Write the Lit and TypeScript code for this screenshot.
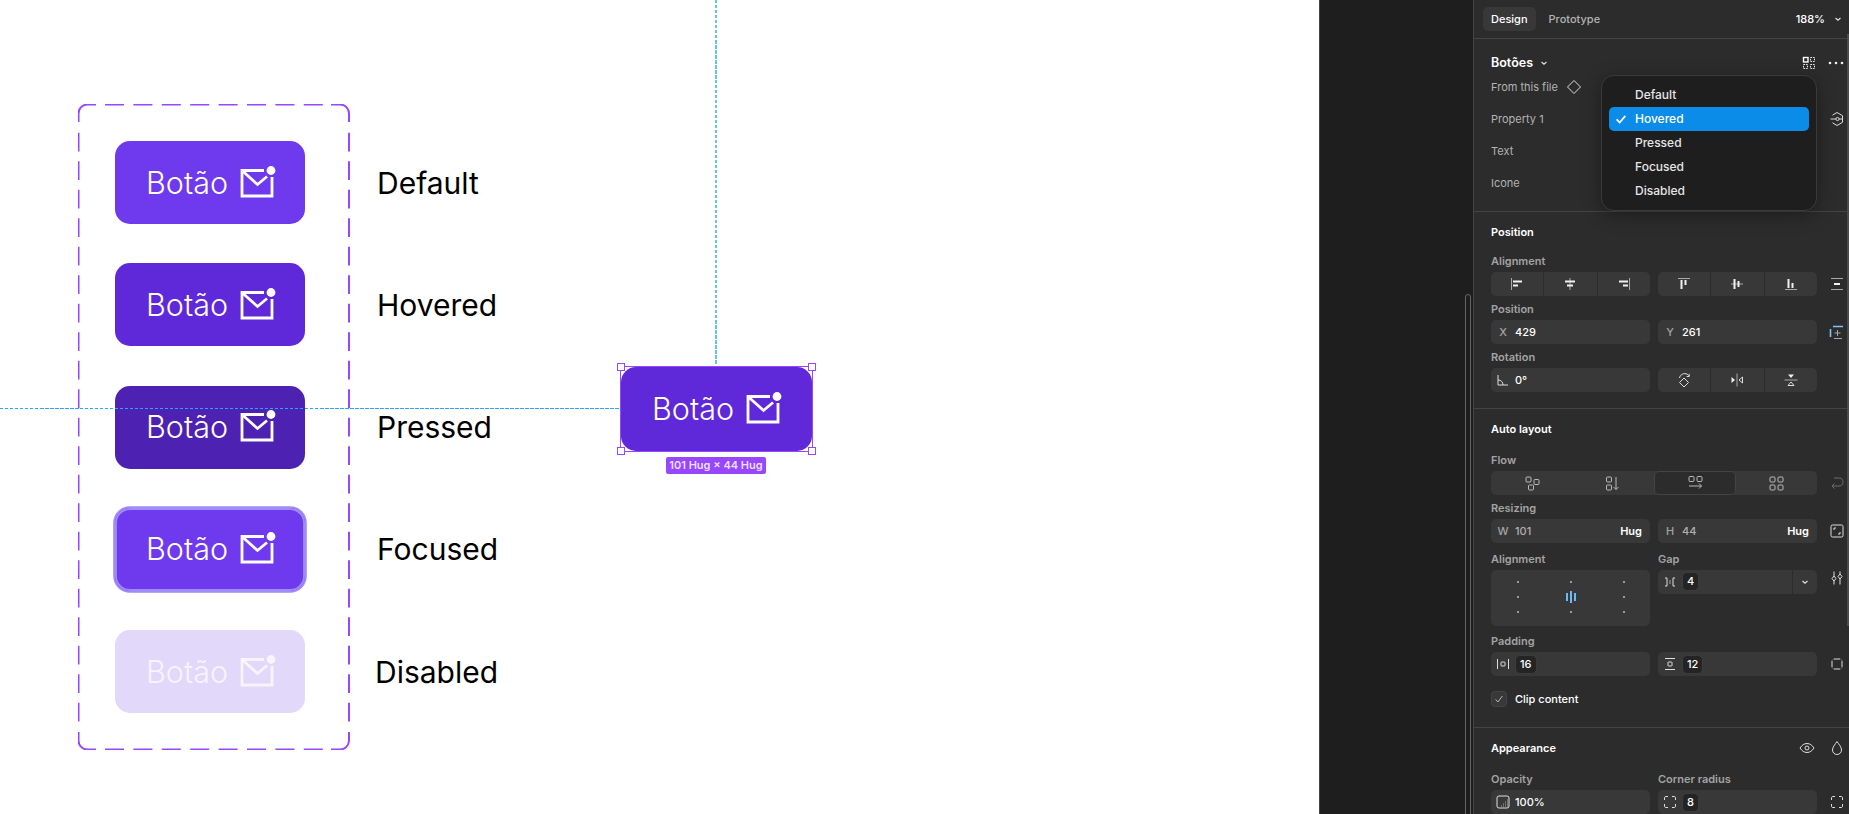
import { LitElement, html, css, svg, nothing } from 'lit';
import { customElement } from 'lit/decorators.js';

const mail = svg`<svg class="mail" width="38" height="38" viewBox="0 0 38 38" fill="none">
  <path d="M26 6.5H4V32H34V13" stroke="currentColor" stroke-width="2.8"/>
  <path d="M4.5 7L19.5 20.5L29 12.5" stroke="currentColor" stroke-width="2.8"/>
  <circle cx="33" cy="6.5" r="4.4" fill="currentColor"/>
</svg>`;

// small panel icons, all on a 16 grid
const ICONS: Record<string, unknown> = {
  chev: svg`<path d="M5.5 7L8 9.2L10.5 7" stroke-width="1.2"/>`,
  grid: svg`<rect x="2.5" y="2.5" width="4.5" height="4.5" stroke="#fff" stroke-width="1.4"/><g stroke="#eee" stroke-dasharray="1.6 1"><rect x="9.5" y="2.5" width="4" height="4"/><rect x="2.5" y="9.5" width="4" height="4"/><rect x="9.5" y="9.5" width="4" height="4"/></g>`,
  dots: svg`<g class="solid"><circle cx="2" cy="8" r="1.3"/><circle cx="8" cy="8" r="1.3"/><circle cx="14" cy="8" r="1.3"/></g>`,
  diamond: svg`<path d="M8 1.5L14.5 8L8 14.5L1.5 8Z"/>`,
  instance: svg`<path d="M3.5 4.2L8 1.5L13.5 4.7V11.3L8 14.5L3.5 11.8"/><circle cx="8.5" cy="8" r="1.6"/><path d="M1.5 8H6.9M10.1 8H13.5"/>`,
  alignL: svg`<path class="dim" d="M2.5 2V14"/><g class="solid"><rect x="4" y="4.5" width="9" height="2"/><rect x="4" y="8.5" width="5" height="2"/></g>`,
  alignC: svg`<path class="dim" d="M8 2V14"/><g class="solid"><rect x="3" y="4.5" width="10" height="2"/><rect x="5" y="8.5" width="6" height="2"/></g>`,
  alignR: svg`<path class="dim" d="M13.5 2V14"/><g class="solid"><rect x="3" y="4.5" width="9" height="2"/><rect x="7" y="8.5" width="5" height="2"/></g>`,
  alignT: svg`<path class="dim" d="M2 2.5H14"/><g class="solid"><rect x="4.5" y="4" width="2" height="9"/><rect x="8.5" y="4" width="2" height="5"/></g>`,
  alignM: svg`<path class="dim" d="M2 8H14"/><g class="solid"><rect x="4.5" y="3" width="2" height="10"/><rect x="8.5" y="5" width="2" height="6"/></g>`,
  alignB: svg`<path class="dim" d="M2 13.5H14"/><g class="solid"><rect x="4.5" y="3" width="2" height="9"/><rect x="8.5" y="7" width="2" height="5"/></g>`,
  distribute: svg`<path d="M2 2.5H14M2 13.5H14" class="dim"/><rect class="solid" x="5" y="7" width="6" height="2"/>`,
  constrain: svg`<path class="blue" d="M4 2.5H14M1.5 5V13" stroke-width="1.6"/><path d="M8.5 6V12M5.5 9H11.5M5 14.5H13" class="dim"/>`,
  angle: svg`<path d="M3 3V13H13"/><path d="M3 8C6 8 8 10 8 13"/>`,
  rotate: svg`<path d="M8 6L12.5 10.5L8 15L3.5 10.5Z"/><path d="M3.5 6C4 3 7 1 10 1.8C11.5 2.2 12.5 3 13 4.2"/><path d="M13.2 1.8V4.5H10.6"/>`,
  flipH: svg`<path class="dim" d="M8 1.5V14.5"/><path class="solid" d="M2.5 5L6 8L2.5 11Z"/><path d="M13.5 5L10 8L13.5 11Z"/>`,
  flipV: svg`<path class="dim" d="M1.5 8H14.5"/><path class="solid" d="M5 2.5L8 6L11 2.5Z"/><path d="M5 13.5L8 10L11 13.5Z"/>`,
  flowFree: svg`<rect x="2" y="2" width="5" height="5" rx="1"/><rect x="10" y="4.5" width="5" height="5" rx="1"/><rect x="4.5" y="10" width="5" height="5" rx="1"/>`,
  flowDown: svg`<rect x="1.5" y="2" width="5" height="5" rx="1"/><rect x="1.5" y="10" width="5" height="5" rx="1"/><path d="M11 2V14.5M8.5 12L11 14.5L13.5 12"/>`,
  flowRight: svg`<rect x="2" y="1.5" width="5" height="5" rx="1"/><rect x="10" y="1.5" width="5" height="5" rx="1"/><path d="M2 11H14.5M12 8.5L14.5 11L12 13.5"/>`,
  flowGrid: svg`<rect x="2" y="2" width="5" height="5" rx="1"/><rect x="10" y="2" width="5" height="5" rx="1"/><rect x="2" y="10" width="5" height="5" rx="1"/><rect x="10" y="10" width="5" height="5" rx="1"/>`,
  wrap: svg`<g class="faint"><path d="M5 3H10.5C13 3 14 5 14 7C14 9.5 12.5 11 10 11H3"/><path d="M5.5 8.5L3 11L5.5 13.5"/></g>`,
  resize: svg`<rect x="2" y="2" width="12" height="12" rx="1.5"/><path d="M5 7V5H7M11 9V11H9"/>`,
  gap: svg`<path d="M3 4H5V12H3M13 4H11V12H13"/><path d="M8 6V10" class="dim"/>`,
  sliders: svg`<path d="M5 1.5V6M5 11V14.5M11 1.5V4M11 9V14.5"/><path d="M5 6L7 8.5L5 11L3 8.5Z"/><path d="M11 4L13 6.5L11 9L9 6.5Z"/>`,
  padH: svg`<path d="M2.5 3V13M13.5 3V13"/><rect x="6" y="6" width="4" height="4" rx="0.5"/>`,
  padV: svg`<path d="M3 2.5H13M3 13.5H13"/><rect x="6" y="6" width="4" height="4" rx="0.5"/>`,
  padAll: svg`<path d="M3 5V11M13 5V11M5 3H11M5 13H11"/><path d="M3 5C3 4 4 3 5 3M11 3C12 3 13 4 13 5M13 11C13 12 12 13 11 13M5 13C4 13 3 12 3 11" class="faint"/>`,
  eye: svg`<path d="M1 8C3 5 5.2 3.5 8 3.5C10.8 3.5 13 5 15 8C13 11 10.8 12.5 8 12.5C5.2 12.5 3 11 1 8Z"/><circle cx="8" cy="8" r="2"/>`,
  drop: svg`<path d="M8 1.5C10 4.5 12.5 7 12.5 10C12.5 12.5 10.5 14.5 8 14.5C5.5 14.5 3.5 12.5 3.5 10C3.5 7 6 4.5 8 1.5Z"/>`,
  opacity: svg`<rect x="2" y="2" width="12" height="12" rx="2"/><path class="dim" d="M6 12H13M8 10H13M10 8H13M12 6H13" stroke-dasharray="1 1"/>`,
  corners: svg`<path d="M2.5 6V4C2.5 3 3 2.5 4 2.5H6M10 2.5H12C13 2.5 13.5 3 13.5 4V6M13.5 10V12C13.5 13 13 13.5 12 13.5H10M6 13.5H4C3 13.5 2.5 13 2.5 12V10"/>`,
  check: svg`<path d="M3.5 8.5L6.5 12L12.5 4"/>`,
  tick: svg`<path d="M3 8.5L6.5 12L13 4.5" stroke-width="2"/>`,
};

const icon = (name: string) => html`<svg class="ic" width="16" height="16" viewBox="0 0 16 16" fill="none">${ICONS[name]}</svg>`;

const VARIANTS = ['Default', 'Hovered', 'Pressed', 'Focused', 'Disabled'];

@customElement('app-root')
export class AppRoot extends LitElement {
  static override styles = css`
    :host {
      display: block;
      width: 1849px;
      height: 814px;
      overflow: hidden;
      font-family: Inter, 'Noto Sans', sans-serif;
    }

    .page {
      display: flex;
      height: 814px;
    }

    /* canvas */
    .canvas {
      position: relative;
      width: 1319px;
      flex: none;
      background: #fff;
      overflow: hidden;
    }

    .set {
      position: absolute;
      left: 78px;
      top: 104px;
      width: 272px;
      height: 646px;
      box-sizing: border-box;
      padding: 37px;
      display: flex;
      flex-direction: column;
      gap: 39.3px;
    }

    .set-outline {
      position: absolute;
      inset: 0;
    }

    .variant {
      display: flex;
      align-items: center;
      gap: 72px;
      width: max-content;
      position: relative;
    }

    .variant-label {
      font-size: 30px;
      line-height: 36px;
      color: #000;
    }

    .variant.disabled .variant-label {
      margin-left: -2px;
    }

    .btn {
      box-sizing: border-box;
      width: 190px;
      height: 83px;
      padding: 0 0 0 31px;
      border-radius: 15px;
      display: flex;
      align-items: center;
      gap: 10px;
      flex: none;
      color: #fff;
      font-size: 30.5px;
      font-weight: 300;
      line-height: 36px;
    }

    .btn .mail {
      flex: none;
    }

    .btn.default {
      background: #6f39ee;
    }

    .btn.hovered {
      background: #5f28d9;
    }

    .btn.pressed {
      background: #4d22b3;
    }

    .btn.focused {
      background: #6f39ee;
      box-shadow: 0 0 0 1.8px #a08bfb, inset 0 0 0 1.9px #a08bfb;
    }

    .btn.disabled {
      background: #e2d8fa;
      color: rgba(255, 255, 255, 0.72);
    }

    .guide-h {
      position: absolute;
      left: 0;
      top: 408px;
      width: 619px;
      height: 1px;
      background: repeating-linear-gradient(90deg, #2ba5fb 0 3.5px, transparent 3.5px 5px);
    }

    .guide-v {
      position: absolute;
      left: 715px;
      top: 0;
      width: 2px;
      height: 365px;
      background: repeating-linear-gradient(180deg, #6abff9 0 3.5px, transparent 3.5px 5px);
    }

    .selected {
      position: absolute;
      left: 621px;
      top: 367px;
      box-sizing: border-box;
      width: 191px;
      height: 84px;
      outline: 1px solid #9747ff;
      border-radius: 0;
    }

    .selected .btn {
      width: 191px;
      height: 84px;
    }

    .handle {
      position: absolute;
      width: 8px;
      height: 8px;
      box-sizing: border-box;
      background: #fff;
      border: 1.5px solid #9747ff;
    }

    .handle.tl { left: -4px; top: -4px; }
    .handle.tr { right: -4px; top: -4px; }
    .handle.bl { left: -4px; bottom: -4px; }
    .handle.br { right: -4px; bottom: -4px; }

    .size-chip {
      position: absolute;
      left: 666px;
      top: 457px;
      width: 100px;
      height: 17px;
      border-radius: 2px;
      background: #9747ff;
      color: #ecdfff;
      font-size: 11px;
      font-weight: 600;
      line-height: 17px;
      text-align: center;
      white-space: nowrap;
    }

    /* dark gutter */
    .gutter {
      position: relative;
      width: 155px;
      flex: none;
      box-sizing: border-box;
      background: #1e1e1e;
      border-left: 1px solid #444;
      border-right: 1px solid #444;
    }

    .gutter-thumb {
      position: absolute;
      left: 145px;
      top: 294px;
      width: 6px;
      height: 560px;
      box-sizing: border-box;
      border: 1px solid #666;
      border-radius: 3px;
    }

    /* panel */
    .panel {
      position: relative;
      flex: 1;
      background: #2c2c2c;
      color: #fff;
      font-size: 11px;
      line-height: 16px;
      font-weight: 500;
    }

    .panel-thumb {
      position: absolute;
      right: 0;
      top: 34px;
      width: 2px;
      height: 592px;
      background: #4c4c4c;
    }

    .ic {
      display: block;
      flex: none;
      stroke: #dedede;
      stroke-width: 1;
    }

    .ic .solid { fill: #f0f0f0; stroke: none; }
    .ic .dim { stroke: #a8a8a8; }
    .ic .faint { stroke: #6c6c6c; }
    .ic .blue { stroke: #7cc4f8; }

    .tabs {
      height: 38px;
      box-sizing: content-box;
      display: flex;
      align-items: center;
      padding: 0 3px 0 9px;
      border-bottom: 1px solid #444;
    }

    .tab {
      padding: 0 8px;
      height: 24px;
      line-height: 24px;
      margin-right: 5px;
      border-radius: 5px;
      color: #b3b3b3;
      font-weight: 550;
    }

    .tab.on {
      background: #383838;
      color: #fff;
    }

    .zoom {
      margin-left: auto;
      font-weight: 550;
      margin-right: 5px;
    }

    .section {
      box-sizing: border-box;
      padding-left: 17px;
      border-bottom: 1px solid #444;
    }

    .section.comp { height: 173px; padding-top: 16px; position: relative; }
    .section.pos { height: 197px; padding-top: 12px; }
    .section.auto { height: 319px; padding-top: 12px; }
    .section.look { height: 90px; padding-top: 12px; border-bottom: none; }

    .comp-head {
      display: flex;
      align-items: center;
      height: 16px;
      font-size: 12.5px;
      font-weight: 600;
    }

    .comp-head .chev { margin-left: 3px; }

    .comp-head .tools {
      margin-left: auto;
      margin-right: 5px;
      display: flex;
      gap: 11px;
    }

    .prop {
      display: flex;
      align-items: center;
      gap: 8px;
      height: 32px;
      color: #b3b3b3;
      font-weight: 400;
      position: relative;
    }

    .prop.first {
      height: 16px;
      margin: 8px 0;
    }

    .prop .end {
      position: absolute;
      left: 338px;
    }

    .menu {
      position: absolute;
      left: 127px;
      top: 36px;
      width: 216px;
      height: 136px;
      box-sizing: border-box;
      padding: 7px;
      background: #1e1e1e;
      border: 1px solid #3a3a3a;
      border-radius: 13px;
      box-shadow: 0 4px 18px rgba(0, 0, 0, 0.35);
      z-index: 2;
      font-size: 12px;
    }

    .menu-item {
      position: relative;
      height: 24px;
      line-height: 24px;
      padding-left: 26px;
      border-radius: 5px;
      color: #e6e6e6;
    }

    .menu-item.on {
      background: #0c8ce9;
      color: #fff;
    }

    .menu-item .ic {
      position: absolute;
      left: 5px;
      top: 5px;
      width: 14px;
      height: 14px;
      stroke: #fff;
    }

    .title {
      height: 16px;
      font-weight: 600;
    }

    .label {
      height: 16px;
      margin: 5px 0 3px;
      color: #a3a3a3;
      font-size: 11px;
      font-weight: 600;
    }

    .title + .label {
      margin-top: 13px;
    }

    .auto .title + .label {
      margin-top: 15px;
    }

    .label.wide-top {
      margin-top: 7.5px;
    }

    .look .label {
      margin-top: 15px;
    }

    .row {
      display: grid;
      grid-template-columns: 159px 159px 24px;
      column-gap: 8px;
      align-items: center;
    }

    .row > .ic {
      justify-self: center;
    }

    .segs {
      height: 24px;
      display: flex;
      background: #383838;
      border-radius: 5px;
      overflow: hidden;
    }

    .seg {
      flex: 1;
      display: flex;
      align-items: center;
      justify-content: center;
      border-left: 1px solid #2c2c2c;
    }

    .seg:first-child {
      border-left: none;
    }

    .flow {
      grid-column: 1 / 3;
      display: flex;
      height: 24px;
      background: #383838;
      border-radius: 5px;
    }

    .flow-item {
      flex: 1;
      display: flex;
      align-items: center;
      justify-content: center;
      border-radius: 5px;
    }

    .flow-item .ic {
      stroke: #b9b9b9;
    }

    .flow-item.on {
      background: #2c2c2c;
      box-shadow: inset 0 0 0 1px #444;
    }

    .field {
      height: 24px;
      display: flex;
      align-items: center;
      background: #383838;
      border-radius: 5px;
      color: #fff;
    }

    .prefix {
      width: 24px;
      flex: none;
      display: flex;
      justify-content: center;
      color: #a3a3a3;
    }

    .field .muted {
      color: #b0b0b0;
    }

    .hug {
      margin-left: auto;
      padding-right: 8px;
      font-weight: 600;
    }

    .token {
      box-sizing: border-box;
      height: 19px;
      min-width: 17px;
      padding: 0 4px;
      line-height: 17px;
      text-align: center;
      background: #242424;
      border: 1px solid #3c3c3c;
      border-radius: 5px;
      font-weight: 550;
    }

    .gap-chev {
      margin-left: auto;
      width: 24px;
      height: 24px;
      display: flex;
      align-items: center;
      justify-content: center;
      border-left: 1px solid #2c2c2c;
    }

    .dots-box {
      box-sizing: border-box;
      height: 56px;
      padding: 5px 0;
      background: #383838;
      border-radius: 5px;
      display: grid;
      grid-template-columns: repeat(3, 1fr);
      grid-template-rows: repeat(3, 15px);
      place-items: center;
    }

    .dot {
      width: 2px;
      height: 2px;
      background: #9a9a9a;
    }

    .bars {
      display: flex;
      align-items: center;
      gap: 2px;
    }

    .bars i {
      display: block;
      width: 2px;
      background: #6db9f5;
    }

    .bars i:nth-child(1), .bars i:nth-child(3) { height: 8px; }
    .bars i:nth-child(2) { height: 12px; }

    .aligned-row {
      align-items: start;
    }

    .clip {
      display: flex;
      align-items: center;
      gap: 8px;
      height: 16px;
      margin-top: 15px;
    }

    .checkbox {
      box-sizing: border-box;
      width: 16px;
      height: 16px;
      display: flex;
      align-items: center;
      justify-content: center;
      background: #383838;
      border: 1px solid #444;
      border-radius: 4px;
    }

    .checkbox .ic {
      width: 12px;
      height: 12px;
    }

    .look-head {
      display: flex;
      align-items: center;
      height: 16px;
      font-weight: 600;
    }

    .look-head .tools {
      margin-left: auto;
      margin-right: 4px;
      display: flex;
      gap: 14px;
    }
  `;

  private renderButton(kind: string) {
    return html`<div class="btn ${kind}"><span>Botão</span>${mail}</div>`;
  }

  private renderCanvas() {
    return html`
      <div class="canvas">
        <div class="set">
          <svg class="set-outline" width="272" height="646" fill="none" stroke="#9747ff" stroke-width="2">
            <path d="M0.5 18V9.5A9 9 0 0 1 9.5 0.5H18M253 0.5H262A9 9 0 0 1 271 9.5V18M271 628V636.5A9 9 0 0 1 262 645.5H253M18 645.5H9.5A9 9 0 0 1 0.5 636.5V628"/>
            <path d="M27 0.5H245M27 645.5H245" stroke-dasharray="19 9.4"/>
            <path d="M0.5 28.7V617.5M271 28.7V617.5" stroke-dasharray="18.7 9.8"/>
          </svg>
          ${VARIANTS.map(
            (v) => html`
              <div class="variant ${v.toLowerCase()}">
                ${this.renderButton(v.toLowerCase())}
                <span class="variant-label">${v}</span>
              </div>
            `
          )}
        </div>
        <div class="guide-h"></div>
        <div class="guide-v"></div>
        <div class="selected">
          ${this.renderButton('hovered')}
          <i class="handle tl"></i><i class="handle tr"></i><i class="handle bl"></i><i class="handle br"></i>
        </div>
        <div class="size-chip">101 Hug × 44 Hug</div>
      </div>
    `;
  }

  private renderComponentSection() {
    return html`
      <div class="section comp">
        <div class="comp-head">
          <span>Botões</span>
          <span class="chev">${icon('chev')}</span>
          <span class="tools">${icon('grid')}${icon('dots')}</span>
        </div>
        <div class="prop first">From this file ${icon('diamond')}</div>
        <div class="prop">Property 1 <span class="end">${icon('instance')}</span></div>
        <div class="prop">Text</div>
        <div class="prop">Icone</div>
        <div class="menu">
          ${VARIANTS.map(
            (v) => html`
              <div class="menu-item ${v === 'Hovered' ? 'on' : ''}">
                ${v === 'Hovered' ? icon('tick') : nothing}${v}
              </div>
            `
          )}
        </div>
      </div>
    `;
  }

  private renderPositionSection() {
    return html`
      <div class="section pos">
        <div class="title">Position</div>
        <div class="label">Alignment</div>
        <div class="row">
          <div class="segs">
            <div class="seg">${icon('alignL')}</div>
            <div class="seg">${icon('alignC')}</div>
            <div class="seg">${icon('alignR')}</div>
          </div>
          <div class="segs">
            <div class="seg">${icon('alignT')}</div>
            <div class="seg">${icon('alignM')}</div>
            <div class="seg">${icon('alignB')}</div>
          </div>
          ${icon('distribute')}
        </div>
        <div class="label">Position</div>
        <div class="row">
          <div class="field"><span class="prefix">X</span>429</div>
          <div class="field"><span class="prefix">Y</span>261</div>
          ${icon('constrain')}
        </div>
        <div class="label">Rotation</div>
        <div class="row">
          <div class="field"><span class="prefix">${icon('angle')}</span>0°</div>
          <div class="segs">
            <div class="seg">${icon('rotate')}</div>
            <div class="seg">${icon('flipH')}</div>
            <div class="seg">${icon('flipV')}</div>
          </div>
        </div>
      </div>
    `;
  }

  private renderAutoLayoutSection() {
    const cells = Array.from({ length: 9 }, (_, i) => i);
    return html`
      <div class="section auto">
        <div class="title">Auto layout</div>
        <div class="label">Flow</div>
        <div class="row">
          <div class="flow">
            <div class="flow-item">${icon('flowFree')}</div>
            <div class="flow-item">${icon('flowDown')}</div>
            <div class="flow-item on">${icon('flowRight')}</div>
            <div class="flow-item">${icon('flowGrid')}</div>
          </div>
          ${icon('wrap')}
        </div>
        <div class="label">Resizing</div>
        <div class="row">
          <div class="field"><span class="prefix">W</span><span class="muted">101</span><span class="hug">Hug</span></div>
          <div class="field"><span class="prefix">H</span><span class="muted">44</span><span class="hug">Hug</span></div>
          ${icon('resize')}
        </div>
        <div class="row">
          <div class="label wide-top">Alignment</div>
          <div class="label wide-top">Gap</div>
        </div>
        <div class="row aligned-row">
          <div class="dots-box">
            ${cells.map((i) =>
              i === 4
                ? html`<div class="bars"><i></i><i></i><i></i></div>`
                : html`<div class="dot"></div>`
            )}
          </div>
          <div class="field">
            <span class="prefix">${icon('gap')}</span><span class="token">4</span>
            <span class="gap-chev">${icon('chev')}</span>
          </div>
          ${icon('sliders')}
        </div>
        <div class="label wide-top">Padding</div>
        <div class="row">
          <div class="field"><span class="prefix">${icon('padH')}</span><span class="token">16</span></div>
          <div class="field"><span class="prefix">${icon('padV')}</span><span class="token">12</span></div>
          ${icon('padAll')}
        </div>
        <div class="clip">
          <span class="checkbox">${icon('check')}</span>
          <span>Clip content</span>
        </div>
      </div>
    `;
  }

  private renderAppearanceSection() {
    return html`
      <div class="section look">
        <div class="look-head">
          <span>Appearance</span>
          <span class="tools">${icon('eye')}${icon('drop')}</span>
        </div>
        <div class="row">
          <div class="label">Opacity</div>
          <div class="label">Corner radius</div>
        </div>
        <div class="row">
          <div class="field"><span class="prefix">${icon('opacity')}</span>100%</div>
          <div class="field"><span class="prefix">${icon('corners')}</span><span class="token">8</span></div>
          ${icon('corners')}
        </div>
      </div>
    `;
  }

  override render() {
    return html`
      <div class="page">
        ${this.renderCanvas()}
        <div class="gutter"><div class="gutter-thumb"></div></div>
        <div class="panel">
          <div class="panel-thumb"></div>
          <div class="tabs">
            <span class="tab on">Design</span>
            <span class="tab">Prototype</span>
            <span class="zoom">188%</span>
            ${icon('chev')}
          </div>
          ${this.renderComponentSection()}
          ${this.renderPositionSection()}
          ${this.renderAutoLayoutSection()}
          ${this.renderAppearanceSection()}
        </div>
      </div>
    `;
  }
}

declare global {
  interface HTMLElementTagNameMap {
    'app-root': AppRoot;
  }
}
